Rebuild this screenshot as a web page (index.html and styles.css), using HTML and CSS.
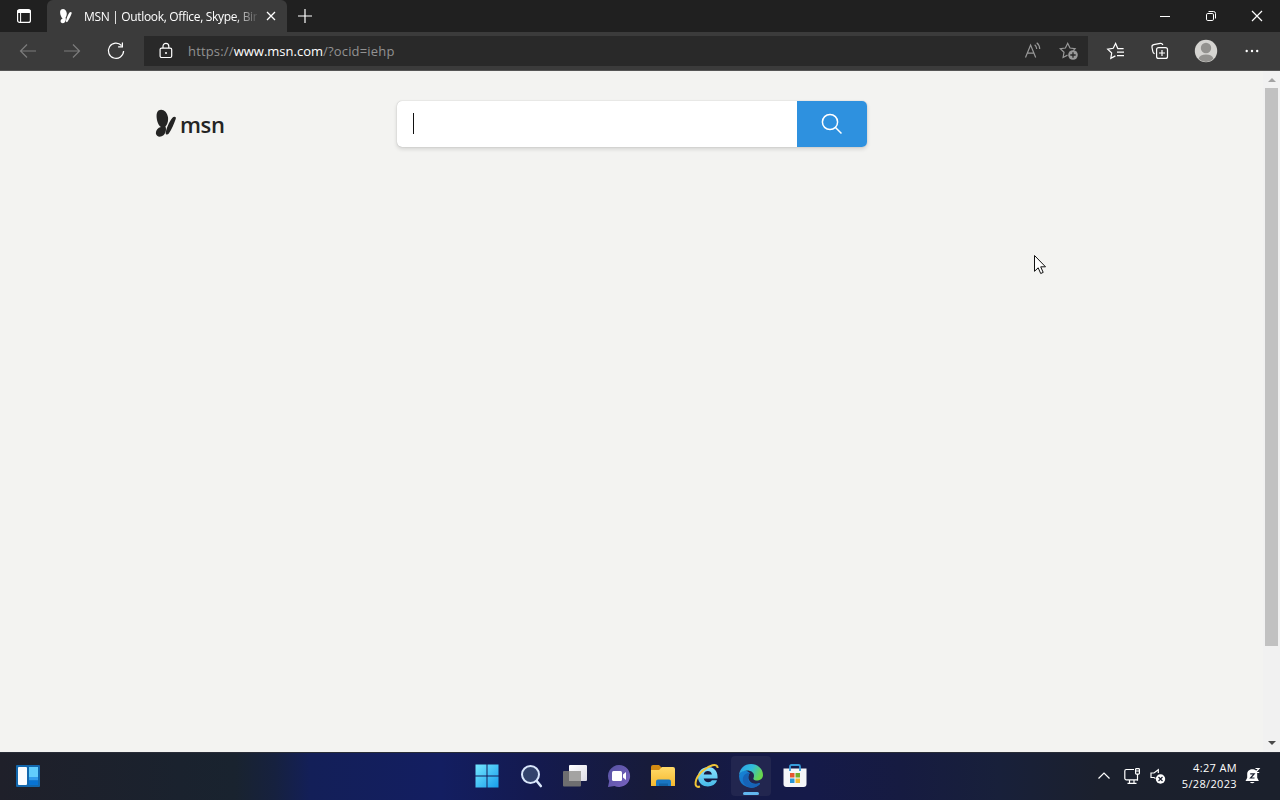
FILE: index.html
```html
<!DOCTYPE html>
<html lang="en">
<head>
  <meta charset="utf-8">
  <title>MSN | Outlook, Office, Skype, Bing</title>
  <link rel="stylesheet" href="styles.css">
</head>
<body>

<header class="tabstrip">
  <div class="tab-actions">
    <svg width="16" height="16" viewBox="0 0 16 16"><rect x="1.600" y="1.600" width="12.800" height="12.800" rx="2" fill="none" stroke="#fff" stroke-width="1.200"/><path d="M1.500 2h13v3h-13z" fill="#fff"/><path d="M4.600 4v10" stroke="#fff"/></svg>
  </div>
  <div class="tab">
    <svg class="favicon" width="16" height="16" viewBox="0 0 16 16" fill="#fff"><path d="M3.200 1.500C5.500-.2 8.700 2 8.800 5.500c0 2-.6 3.200-1.300 4.200.7 1.500.3 3.600-.9 4.800-1.400 1.200-3.800.8-4-1-.1-1.500.8-2.500 2-3C2.500 8.500 1 3.500 3.200 1.500z"/><path d="M11.500 4.600c1-1.200 2.600-.6 2.100.9-.6 1.900-2.500 6.200-4.100 8.200-.7.900-1.700.3-1.500-.9.400-2.500 2-6.300 3.500-8.200z"/></svg>
    <span class="tab-title">MSN | Outlook, Office, Skype, Bin</span>
    <svg width="16" height="16" viewBox="0 0 16 16"><path d="M4 4l8 8M12 4l-8 8" stroke="#fff" stroke-width="1.300"/></svg>
  </div>
  <div class="new-tab">
    <svg width="16" height="16" viewBox="0 0 16 16"><path d="M8 1v14M1 8h14" stroke="#fff" stroke-width="1.200"/></svg>
  </div>
  <div class="window-buttons">
    <span><svg width="12" height="12" viewBox="0 0 12 12"><path d="M1 6.500h10" stroke="#fff"/></svg></span>
    <span><svg width="12" height="12" viewBox="0 0 12 12" fill="none" stroke="#fff"><rect x="1.500" y="3.500" width="7" height="7" rx="1.300"/><path d="M3.500 1.500h5a2 2 0 0 1 2 2v5"/></svg></span>
    <span><svg width="12" height="12" viewBox="0 0 12 12"><path d="M1 1l10 10M11 1L1 11" stroke="#fff" stroke-width="1.200"/></svg></span>
  </div>
</header>

<nav class="toolbar">
  <span class="tool dim"><svg width="20" height="20" viewBox="0 0 20 20"><path d="M18 10H2.500M9 3.500L2.500 10 9 16.500"/></svg></span>
  <span class="tool dim"><svg width="20" height="20" viewBox="0 0 20 20"><path d="M2 10h15.500M11 3.500l6.500 6.500-6.500 6.500"/></svg></span>
  <span class="tool"><svg width="20" height="20" viewBox="0 0 20 20"><path d="M15.500 4.500A7.600 7.600 0 1 0 17.600 10M16.400 1.500v4.300h-4.300"/></svg></span>
  <div class="address">
    <svg class="lock" width="16" height="18" viewBox="0 0 16 18"><rect x="2.100" y="6.100" width="11.600" height="9.400" rx="1.500"/><path d="M5 6V4.200a2.900 2.900 0 0 1 5.800 0V6"/><circle cx="8" cy="11" r="1" fill="#fff" stroke="none"/></svg>
    <span class="url">https://<b>www.msn.com</b>/?ocid=iehp</span>
    <span class="address-tool"><svg width="18" height="18" viewBox="0 0 18 18"><path d="M1.500 15.500L6.600 3l5.100 12.500M3.300 11.200h6.700M10.700 2.800c1.300 1 2 2.500 2 4.300M12.700.8c1.900 1.500 3 3.600 3 6.200"/></svg></span>
    <span class="address-tool"><svg width="20" height="20" viewBox="0 0 20 20"><path d="M8.500 14.100l-4.400 2.400.9-5.200-3.700-3.600 5.100-.7L8.700 2.300 11 7l5.100.7-1.900 1.900"/><circle cx="14" cy="14" r="4.800" fill="#999" stroke="none"/><path class="plus" d="M14 11.300v5.400M11.300 14h5.400"/></svg></span>
  </div>
  <span class="tool"><svg width="20" height="20" viewBox="0 0 20 20"><path d="M17.600 7.600h-5.800L9.600 2.500 7.200 7.300l-5.500.8 4 3.900-.9 5.400 4.600-2.500M11 11.100h7M11 14.600h7"/></svg></span>
  <span class="tool"><svg width="20" height="20" viewBox="0 0 20 20"><rect x="6.600" y="6.600" width="10.900" height="10.800" rx="2"/><path d="M12 9v6M9 12h6M4.600 12.800C3.500 12.300 3 11.600 2.800 10.500L2 6.300c-.2-1.300.4-2.300 1.700-2.600l6.500-1.300c1.300-.2 2.200.3 2.700 1.500"/></svg></span>
  <span class="tool profile"><svg width="24" height="24" viewBox="0 0 24 24"><circle cx="12" cy="12" r="11.200" fill="#d5d4d1"/><circle cx="12" cy="9" r="5.200" fill="#93928f"/><path d="M4.600 19.600C5.500 16.500 8 15.500 12 15.500s6.500 1 7.400 4.100C15.800 24 8.200 24 4.600 19.600z" fill="#93928f"/></svg></span>
  <span class="tool"><svg width="16" height="16" viewBox="0 0 16 16"><circle cx="2.700" cy="8" r="1.200"/><circle cx="8" cy="8" r="1.200"/><circle cx="13.200" cy="8" r="1.200"/></svg></span>
</nav>

<main class="page">
  <div class="content">
    <div class="logo">
      <svg width="22" height="28" viewBox="0 0 22 28" fill="#242424"><path d="M3.500 1.500C7.500-.8 12.200 2.500 13 8.300c.5 4.500-.8 7.200-2.600 9.200 1.300 2.600.4 6.700-1.900 8.800-2.800 2.300-7.200 1.700-7.600-1.700-.3-3.300 1.800-5.700 5-6.600C1.800 15.300-.2 4 3.500 1.500z"/><path d="M17.200 8.900c1.700-2.100 4.500-1.400 3.500 1.100-1.500 4.300-4.100 10.700-6.900 14.600-1.200 1.600-3.400 1.300-3.100-.9.700-4.800 3.600-11 6.500-14.800z"/></svg>
      <span>msn</span>
    </div>
    <div class="search">
      <div class="search-input"><i class="caret"></i></div>
      <div class="search-button"><svg width="22" height="22" viewBox="0 0 22 22" fill="none" stroke="#fff" stroke-width="1.500"><circle cx="9" cy="9" r="7.600"/><path d="M14.500 14.500l6 6"/></svg></div>
    </div>
  </div>
  <div class="scrollbar">
    <i class="arrow up"></i>
    <i class="thumb"></i>
    <i class="arrow down"></i>
  </div>
</main>

<svg class="cursor" width="14" height="22" viewBox="0 0 14 22"><path d="M1.500 1.500v15.800l3.700-3.500 2.500 5.700 2.500-1.100-2.500-5.600h4.800z" fill="#fff" stroke="#111"/></svg>

<footer class="taskbar">
  <div class="widgets">
    <svg width="24" height="22" viewBox="0 0 24 22"><rect width="24" height="22" rx="1" fill="#1267ad"/><rect x="2" y="2" width="9" height="18" rx="1" fill="#fafcff"/><path d="M13 2h9v10h-9z" fill="#62cdfc"/><path d="M13 12h9v3.500h-9z" fill="#329cec"/><path d="M13 15.500h9V20h-9z" fill="#0873d2"/></svg>
  </div>
  <div class="apps">
    <span class="app"><svg width="24" height="24" viewBox="0 0 24 24">
      <defs><linearGradient id="win" x1="0" y1="0" x2="24" y2="24" gradientUnits="userSpaceOnUse"><stop stop-color="#76e9ff"/><stop offset="1" stop-color="#159bea"/></linearGradient></defs>
      <path d="M.5.500h11v11H.500zM12.500.500h11v11h-11zM.5 12.500h11v11H.500zM12.500 12.500h11v11h-11z" fill="url(#win)"/></svg></span>
    <span class="app"><svg width="24" height="24" viewBox="0 0 24 24"><path d="M17.300 16.500l4.500 5.500" stroke="#d9e6fb" stroke-width="2.600" stroke-linecap="round"/><circle cx="11.500" cy="10.500" r="8.500" fill="#33436c" stroke="#d9e6fb" stroke-width="2"/></svg></span>
    <span class="app"><svg width="26" height="24" viewBox="0 0 26 24">
      <defs><linearGradient id="view" x2="1" y2="1"><stop stop-color="#fff"/><stop offset="1" stop-color="#dcdbe5"/></linearGradient></defs>
      <rect x="7" y="1" width="18" height="16" rx="1" fill="url(#view)"/><rect x="1" y="7" width="18" height="15.500" rx="1" fill="#6e6e70"/><path d="M7 7h12v10H7z" fill="#a4a3a2"/></svg></span>
    <span class="app"><svg width="24" height="24" viewBox="0 0 24 24">
      <defs><linearGradient id="chat" x2="1" y2="1"><stop stop-color="#5552a2"/><stop offset="1" stop-color="#7963c0"/></linearGradient></defs>
      <path d="M12 1a11 11 0 1 1-4.500 21L1 23l1.200-6A11 11 0 0 1 12 1z" fill="url(#chat)"/><rect x="5" y="7" width="10" height="10" rx="1.500" fill="#fff"/><path d="M16 10.500l3-2.500v8l-3-2.500z" fill="#fff"/></svg></span>
    <span class="app"><svg width="26" height="24" viewBox="0 0 26 24">
      <defs><linearGradient id="folder" x2="0" y2="1"><stop stop-color="#ffda69"/><stop offset="1" stop-color="#f5b82f"/></linearGradient></defs>
      <path d="M1 3q0-2 2-2h6l3 3v4H1z" fill="#d38b13"/><path d="M1 6h8l3-3h11q2 0 2 2v17H1z" fill="url(#folder)"/><path d="M6 22v-4.500q0-2 2-2h11q2 0 2 2V22z" fill="#1976c3"/><path d="M9 19.500h9V22H9z" fill="#1262a5"/></svg></span>
    <span class="app"><svg width="26" height="26" viewBox="0 0 26 26">
      <defs><linearGradient id="ie" x2="0" y2="1"><stop stop-color="#8ce4ff"/><stop offset="1" stop-color="#45b8e8"/></linearGradient></defs>
      <path d="M23.500 15.500H9.700c.5 4.300 6.800 4.700 8.200 1.800h5.100C20.200 26.500 4.300 25.500 4 14 3.800 1 25 0 23.500 15.500zM9.700 11.500h8.200c-.6-4.600-7.600-4.500-8.200 0z" fill="url(#ie)"/><path d="M6 23.500C-1 26 .5 15 8.500 8 15 2.300 23.500-.5 23.700 5" fill="none" stroke="#f0c537" stroke-width="2"/></svg></span>
    <span class="app active"><svg width="26" height="26" viewBox="0 0 26 26">
      <defs><linearGradient id="edge" x2="1" y2=".4"><stop stop-color="#2b9be8"/><stop offset=".55" stop-color="#31bddb"/><stop offset="1" stop-color="#68d64f"/></linearGradient>
      <linearGradient id="edge-low" x2="1" y2="1"><stop stop-color="#1687d9"/><stop offset="1" stop-color="#1662b5"/></linearGradient></defs>
      <path d="M1 13a12 12 0 0 0 20.500 8.200c1-.9.300-1.600-.7-1.100-5 2-10.800-1-10.300-6.400.2-2.500 1.400-3.600 1.400-3.600L7.500 7C3.500 8 1.500 10 1 13z" fill="url(#edge-low)"/><path d="M1 13C1.200 5.500 6.500 1 13 1s12 4.800 12 10.900c0 5.400-7 6.700-9.300 4.500-1-1 .3-1.300.3-3.600 0-3-2.800-5.200-6.800-5.200C4.500 7.600 1.500 10 1 13z" fill="url(#edge)"/><path d="M5 18c-1-5.500 3-8.500 7-8-2.500 2-3.500 8 1.500 10.500 3 1.500 6 .7 7.800 0 .8-.3 1 .2.500.7C17 26.500 7 25.500 5 18z" fill="#1763b6"/></svg></span>
    <span class="app"><svg width="24" height="26" viewBox="0 0 24 26"><path d="M7 8V3.500Q7 2 8.500 2h7Q17 2 17 3.500V8" fill="none" stroke="#379cda" stroke-width="1.800"/><path d="M.5 5.500h23V21q0 3-3 3h-17q-3 0-3-3z" fill="#f5f6f8"/><path d="M7 5v3M17 5v3" stroke="#379cda" stroke-width="1.800"/><path d="M7 10h4.500v4.500H7z" fill="#e65530"/><path d="M12.500 10H17v4.500h-4.500z" fill="#73ac2c"/><path d="M7 15.500h4.500V20H7z" fill="#2997d6"/><path d="M12.500 15.500H17V20h-4.500z" fill="#f1b72c"/></svg></span>
  </div>
  <div class="tray">
    <svg class="chevron" width="14" height="10" viewBox="0 0 14 10"><path d="M1.500 7.500L7 2l5.500 5.500"/></svg>
    <svg class="network" width="18" height="18" viewBox="0 0 18 18"><path d="M11 2.500H3.300a1.500 1.500 0 0 0-1.500 1.500v7.300a1.500 1.500 0 0 0 1.500 1.500H15M6.500 13v3M11 13v3M4.500 16.300h9"/><rect x="12.600" y="1.600" width="3.800" height="5.500" rx=".8"/><path d="M14.500 7v6.500M13 4h3"/></svg>
    <svg class="volume" width="18" height="18" viewBox="0 0 18 18"><path d="M6.500 11.500L5 10.500H2V6h3l4.300-3.300V6"/><circle cx="11.500" cy="12" r="4.700" fill="#fff" stroke="none"/><path class="mute" d="M9.500 10l4 4M13.500 10l-4 4"/></svg>
    <div class="clock"><span>4:27 AM</span><span>5/28/2023</span></div>
    <svg class="bell" width="16" height="18" viewBox="0 0 16 18"><path d="M.500 14l1.700-3.300V7C2.200.800 12.200.800 12.200 6.500v4.200l1.700 3.300z" fill="#fff" stroke="none"/><path d="M4.800 15q2.400 2.600 4.800 0z" fill="#fff" stroke="none"/><path class="zed" d="M5.200 6.800h4L5.500 11h4"/><path d="M10.500 1.500H14l-3.500 4h3.700"/></svg>
  </div>
</footer>

</body>
</html>
```

FILE: styles.css
```css
* { box-sizing: border-box; }

body {
  margin: 0;
  height: 800px;
  display: flex;
  flex-direction: column;
  overflow: hidden;
  font-family: "Open Sans", "Noto Sans", sans-serif;
  background: #f3f3f1;
}

svg { display: block; flex: none; }

/* tabs */
.tabstrip {
  height: 32px;
  flex: none;
  display: flex;
  background: #202020;
}
.tab-actions { width: 47px; display: flex; align-items: center; justify-content: center; }
.tab {
  width: 240px;
  padding: 0 8px 0 11px;
  display: flex;
  align-items: center;
  background: #3b3b3b;
  border-radius: 6px 6px 0 0;
}
.tab-title {
  width: 173px;
  margin: 0 6px 0 10px;
  overflow: hidden;
  white-space: nowrap;
  font-size: 12px;
  letter-spacing: -.33px;
  color: #fff;
  -webkit-mask-image: linear-gradient(90deg, #000 150px, transparent 176px);
  mask-image: linear-gradient(90deg, #000 150px, transparent 176px);
}
.new-tab { width: 35px; display: flex; align-items: center; justify-content: center; }
.window-buttons { margin-left: auto; display: flex; }
.window-buttons span { width: 46px; display: flex; align-items: center; justify-content: center; }

/* toolbar */
.toolbar {
  height: 39px;
  flex: none;
  padding: 0 6px;
  display: flex;
  align-items: center;
  background: #3b3b3b;
  border-bottom: 1px solid #555;
}
.tool { width: 44px; display: flex; justify-content: center; }
.toolbar svg { fill: none; stroke: #fff; stroke-width: 1.2; }
.toolbar .dim svg { stroke: #7c7c7c; }
.toolbar .profile { width: 48px; }
.toolbar .profile svg { stroke: none; }
.toolbar .tool:last-child svg { fill: #fff; stroke: none; }
.address {
  width: 944px;
  height: 30px;
  margin: 0 6px;
  padding: 0 1px 0 14px;
  display: flex;
  align-items: center;
  background: #292929;
}
.url { flex: 1; margin-left: 14px; font-size: 13px; letter-spacing: .17px; color: #929292; }
.url b { font-weight: 500; letter-spacing: 0; color: #fff; }
.address-tool { width: 36px; display: flex; justify-content: center; }
.toolbar .address-tool svg { stroke: #999; }
.plus { stroke: #292929; stroke-width: 1.3; }

/* page */
.page { height: 681px; flex: none; display: flex; }
.content { flex: 1; padding: 30px 0 0 155px; display: flex; align-items: flex-start; }
.logo {
  width: 242px;
  height: 46px;
  display: flex;
  align-items: center;
  gap: 3px;
  font-size: 22px;
  font-weight: 600;
  color: #242424;
}
.logo svg { margin-top: -2px; }
.logo span { margin-top: -1px; letter-spacing: -.4px; }
.search {
  width: 470px;
  height: 46px;
  display: flex;
  border-radius: 5px;
  background: #fff;
  box-shadow: 0 0 1px rgba(0, 0, 0, .3), 0 2px 4px rgba(0, 0, 0, .14);
  overflow: hidden;
}
.search-input { flex: 1; padding: 12px 16px; }
.caret { display: block; width: 1px; height: 21px; background: #111; }
.search-button { width: 70px; display: flex; align-items: center; justify-content: center; background: #2e91df; }

.scrollbar {
  width: 17px;
  padding: 7px 2px 7px;
  display: flex;
  flex-direction: column;
  align-items: center;
  background: #f1f1f1;
}
.thumb { width: 13px; height: 558px; margin-top: 6px; background: #c1c1c1; }
.arrow { border: 4px solid transparent; }
.up { height: 4px; border-top: 0; border-bottom-color: #a3a3a3; }
.down { margin-top: auto; border-bottom: 0; border-top-color: #4a4a4a; }

.cursor { position: absolute; left: 1033px; top: 254px; }

/* taskbar */
.taskbar {
  height: 48px;
  flex: none;
  padding-bottom: 1px;
  display: flex;
  align-items: center;
  border-top: 1px solid #292d38;
  background: linear-gradient(90deg, #1f202a 0, #1a222e 180px, #19232f 235px, #16213f 275px, #131f58 310px, #131e61 440px, #141a50 530px, #171b3a 650px, #151a47 745px, #151a49 810px, #161b41 900px, #18203a 1000px, #1b202d 1100px, #1b202c 100%);
}
.widgets { width: 464px; padding-left: 16px; }
.apps { display: flex; gap: 4px; padding-left: 3px; }
.app {
  position: relative;
  width: 40px;
  height: 40px;
  display: flex;
  align-items: center;
  justify-content: center;
  border-radius: 4px;
}
.active { background: #22264f; }
.active::after {
  content: "";
  position: absolute;
  left: 12px;
  bottom: 1px;
  width: 16px;
  height: 3px;
  border-radius: 2px;
  background: #62b7ef;
}
.tray { margin-left: auto; padding-right: 19px; display: flex; align-items: center; }
.tray svg { fill: none; stroke: #fff; stroke-width: 1.2; }
.network { margin-left: 12px; }
.volume { margin-left: 8px; }
.mute { stroke: #1b2030; }
.zed { stroke: #1b2030; stroke-width: 1.2; }
.clock {
  width: 70px;
  margin-right: 8px;
  display: flex;
  flex-direction: column;
  align-items: flex-end;
  font-size: 11px;
  line-height: 16px;
  letter-spacing: .35px;
  color: #fff;
}
```
